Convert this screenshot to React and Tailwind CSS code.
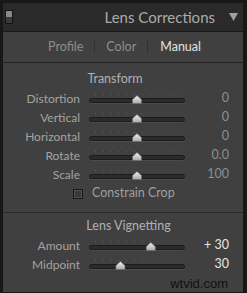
import React from "react";

const TRACK_W = 96;

function Slider({ pos }) {
  const x = 2 + pos * (TRACK_W - 4);
  const ticks = [];
  for (let i = 0; i < 12; i++) ticks.push(6 + i * 7.8);
  return (
    <svg width={TRACK_W} height="14" viewBox={`0 0 ${TRACK_W} 14`} className="block">
      {ticks.map((t, i) => (
        <rect key={i} x={t} y="2" width="1" height="1.2" fill="#5a5a5a" />
      ))}
      <rect x="0.5" y="6.5" width={TRACK_W - 1} height="4" rx="2" fill="#2b2b2b" stroke="#1b1b1b" />
      <line x1="2" y1="11.5" x2={TRACK_W - 2} y2="11.5" stroke="#4c4c4c" strokeWidth="1" />
      <defs>
        <linearGradient id="thumbg" x1="0" y1="0" x2="0" y2="1">
          <stop offset="0" stopColor="#f2f2f2" />
          <stop offset="1" stopColor="#a8a8a8" />
        </linearGradient>
      </defs>
      <path
        d={`M ${x} 3.5 L ${x + 4.5} 7.5 L ${x + 4.5} 11.5 L ${x - 4.5} 11.5 L ${x - 4.5} 7.5 Z`}
        fill="url(#thumbg)"
        stroke="#6a6a6a"
        strokeWidth="0.6"
      />
    </svg>
  );
}

function Row({ label, pos, value, bright }) {
  return (
    <div className="flex h-[19px] items-center">
      <div className="w-[77px] text-right text-[12px] text-[#a3a3a3]">{label}</div>
      <div className="ml-[9px] w-[96px]">
        <Slider pos={pos} />
      </div>
      <div
        className={`w-[44px] text-right text-[12.5px] ${bright ? "text-[#e6e6e6]" : "text-[#8e8e8e]"}`}
      >
        {value}
      </div>
    </div>
  );
}

export default function App() {
  return (
    <div
      className="flex h-[293px] w-[247px] flex-col bg-[#181818] pl-[3px] pr-[4px] pt-[3px] pb-[1px]"
      style={{ fontFamily: "Lato, 'Open Sans', sans-serif" }}
    >
      {/* header */}
      <div className="flex h-[28px] items-center bg-[#2a2a2a]">
        <div className="ml-[2px] flex h-[14px] w-[8px] flex-col border border-[#141414]">
          <div className="h-[6px] bg-[#8a8a8a]" />
          <div className="flex-1 bg-[#3a3a3a]" />
        </div>
        <div className="flex-1 text-right text-[15px] leading-none text-[#ababab]">Lens Corrections</div>
        <svg width="9" height="8" viewBox="0 0 9 8" className="ml-[14px] mr-[5px]">
          <path d="M0 0 L9 0 L4.5 8 Z" fill="#a0a0a0" />
        </svg>
      </div>

      {/* body */}
      <div className="mt-[1px] flex flex-1 flex-col bg-[#404040]">
        {/* tabs */}
        <div className="flex h-[30px] items-center pl-[45px] text-[12.5px]">
          <span className="text-[#8d8d8d]">Profile</span>
          <span className="ml-[11px] h-[12px] w-px bg-[#303030]" />
          <span className="ml-[11px] text-[#8d8d8d]">Color</span>
          <span className="ml-[11px] h-[12px] w-px bg-[#303030]" />
          <span className="ml-[12px] text-[#e2e2e2]">Manual</span>
        </div>
        <div className="h-px bg-[#222222]" />

        {/* Transform */}
        <div className="pt-[7px]">
          <div className="flex h-[19px] items-center justify-center pr-[16px] text-[12.5px] text-[#b0b0b0]">
            Transform
          </div>
          <Row label="Distortion" pos={0.5} value="0" />
          <Row label="Vertical" pos={0.5} value="0" />
          <Row label="Horizontal" pos={0.5} value="0" />
          <Row label="Rotate" pos={0.5} value="0.0" />
          <Row label="Scale" pos={0.5} value="100" />
          <div className="flex h-[19px] items-center">
            <div className="ml-[70px] h-[10px] w-[10px] border border-[#1a1a1a] bg-[#383838] shadow-[inset_0_0_0_1px_#505050]" />
            <span className="ml-[9px] text-[12.5px] text-[#9f9f9f]">Constrain Crop</span>
          </div>
        </div>

        <div className="mt-[9px] h-px bg-[#2a2a2a]" />

        {/* Lens Vignetting */}
        <div className="pt-[4px]">
          <div className="flex h-[19px] items-center justify-center pl-[11px] text-[12.5px] text-[#b0b0b0]">
            Lens Vignetting
          </div>
          <Row label="Amount" pos={0.65} value="+ 30" bright />
          <Row label="Midpoint" pos={0.32} value="30" bright />
        </div>

        <div className="flex flex-1 items-start justify-end pr-[15px] pt-[3px]">
          <span
            className="text-[13px] leading-none text-[#111111]"
            style={{ fontFamily: "'Liberation Sans', Arial, sans-serif" }}
          >
            wtvid.com
          </span>
        </div>
      </div>
    </div>
  );
}
